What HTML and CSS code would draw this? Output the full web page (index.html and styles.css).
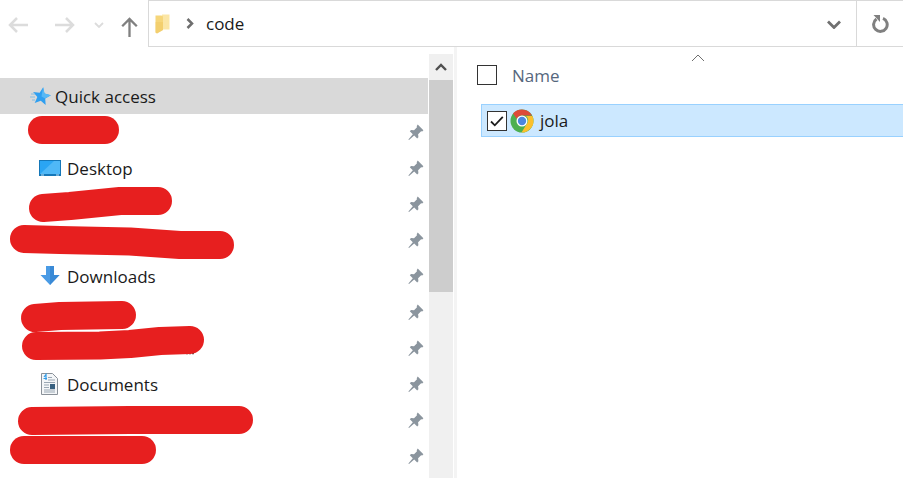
FILE: index.html
```html
<!DOCTYPE html>
<html lang="en">
<head>
<meta charset="utf-8">
<title>code</title>
<link rel="stylesheet" href="styles.css">
</head>
<body>
<svg class="defs" width="0" height="0" aria-hidden="true">
  <symbol id="pin" viewBox="0 0 16 16">
    <path d="M9.700.6l5.700 5.700-1.200 1.200-1.100-.3-3 3 .3 3-1.200 1.200-3-3L1 16l-.6-.6 4.400-5.200-3-3 1.200-1.200 3 .3 3-3-.3-1.100z" fill="#8b959e"/>
  </symbol>
</svg>
<div class="window">
  <header class="toolbar">
    <nav class="nav">
      <svg class="nav-icon back" width="22" height="18" viewBox="0 0 22 18"><path d="M21 9H3M10 2 3 9l7 7" fill="none" stroke="#dcdcdc" stroke-width="2.500"/></svg>
      <svg class="nav-icon forward" width="22" height="18" viewBox="0 0 22 18"><path d="M1 9h18M12 2l7 7-7 7" fill="none" stroke="#dcdcdc" stroke-width="2.500"/></svg>
      <svg class="nav-icon recent" width="10" height="6" viewBox="0 0 10 6"><path d="M1 1l4 4 4-4" fill="none" stroke="#dcdcdc" stroke-width="1.800"/></svg>
      <svg class="nav-icon up" width="17" height="20" viewBox="0 0 17 20"><path d="M8.500 20V2M1.200 9.200l7.300-7.300 7.300 7.300" fill="none" stroke="#808080" stroke-width="2.300"/></svg>
    </nav>
    <div class="address">
      <svg class="folder" width="15" height="20" viewBox="0 0 15 20"><path d="M7 .5h7.500v15H7z" fill="#fbe6a6"/><path d="M.5 1.500h6l1.500 1v13.500l-6 3.500-1.500-1z" fill="#f6d67a"/><path d="M.5 8h7.500v8l-6 3.500-1.500-1z" fill="#efc862" opacity=".5"/></svg>
      <svg class="crumb" width="8" height="11" viewBox="0 0 8 11"><path d="M1.500 1l4.500 4.500L1.500 10" fill="none" stroke="#6e6e6e" stroke-width="2.500"/></svg>
      <span class="path">code</span>
      <svg class="dropdown" width="14" height="9" viewBox="0 0 14 9"><path d="M1 1.500l6 6 6-6" fill="none" stroke="#707070" stroke-width="2.800"/></svg>
      <div class="refresh">
        <svg width="18" height="18" viewBox="0 0 18 18"><path d="M5.500 4A6.800 6.800 0 1 0 12 3.300" fill="none" stroke="#808080" stroke-width="3"/><path d="M2.500 0h6.500v7z" fill="#808080"/></svg>
      </div>
    </div>
  </header>
  <main class="main">
    <aside class="sidebar">
      <div class="tree">
        <div class="tree-top"></div>
        <div class="row row-active">
          <svg class="qa-icon" width="22" height="20" viewBox="0 0 22 20"><path d="M14.150 1.140L15.500 7.600 21.900 9.200 16.200 12.500 16.660 19.040 11.770 14.640 5.670 17.100 8.340 11.080 4.100 6.040 10.660 6.720z" fill="#2f9ff0"/><path d="M14.150 1.140L15.500 7.600 21.900 9.200 16.200 12.500 12.500 10.500z" fill="#58b8f5"/><path d="M2 8h4M1 11h5M3 14h3" stroke="#86bde0" stroke-width="1"/></svg>
          <span class="label">Quick access</span>
        </div>
        <div class="row"><svg class="pin"><use href="#pin"/></svg></div>
        <div class="row">
          <svg class="item-icon" width="22" height="16" viewBox="0 0 22 16"><path d="M0 0h22v16H0z" fill="#1577b8"/><path d="M1 1h20v13H1z" fill="#2aa5f3"/><path d="M1 14 15 1h6v13z" fill="#4fb8f7"/><path d="M2 15h3M17 15h3" stroke="#bfe3f8"/></svg>
          <span class="label">Desktop</span><svg class="pin"><use href="#pin"/></svg>
        </div>
        <div class="row"><svg class="pin"><use href="#pin"/></svg></div>
        <div class="row"><svg class="pin"><use href="#pin"/></svg></div>
        <div class="row">
          <svg class="item-icon" width="22" height="20" viewBox="0 0 22 20"><path d="M7 0h8v9h5.500L11 19 1.500 9H7z" fill="#4a9be5"/><path d="M11 0h4v9h5.500L11 19z" fill="#3a8ad6"/></svg>
          <span class="label">Downloads</span><svg class="pin"><use href="#pin"/></svg>
        </div>
        <div class="row"><svg class="pin"><use href="#pin"/></svg></div>
        <div class="row"><svg class="pin"><use href="#pin"/></svg></div>
        <div class="row">
          <svg class="item-icon" width="22" height="22" viewBox="0 0 22 22"><path d="M2.500.5h11l5 5v16h-16z" fill="#f4f6f8" stroke="#8a9199"/><path d="M5 4l2-2.500V7M4.500 5.500H8" fill="none" stroke="#2f9be8" stroke-width="1.200"/><path d="M9 4.500h4M9 7h7M5 9.500h11M5 12h5M5 14.500h5M5 17h11M5 19h11" stroke="#9aa7b3"/><path d="M11 11h5v5h-5z" fill="#38607f"/></svg>
          <span class="label">Documents</span><svg class="pin"><use href="#pin"/></svg>
        </div>
        <div class="row"><svg class="pin"><use href="#pin"/></svg></div>
        <div class="row"><svg class="pin"><use href="#pin"/></svg></div>
      </div>
      <svg class="redactions" width="260" height="478" viewBox="0 0 260 478" aria-hidden="true">
        <path d="M186 353.500h9" stroke="#555" stroke-width="1.500" stroke-dasharray="2 1"/>
        <g fill="none" stroke="#e71f1f" stroke-width="28" stroke-linecap="round" stroke-linejoin="round">
          <path d="M42 130h63"/>
          <path d="M43 208l27-2 50-5h38"/>
          <path d="M24 239l36 1 70 1.500 50 3.500h40"/>
          <path d="M35 318l25-2 62-1"/>
          <path d="M36 346l64-.5 30-1.500 30-3 30-1"/>
          <path d="M32 421l98-1h109"/>
          <path d="M24 450h118"/>
        </g>
      </svg>
      <div class="scrollbar">
        <div class="scroll-up"><svg width="12" height="8" viewBox="0 0 12 8"><path d="M1 7l5-5 5 5" fill="none" stroke="#505050" stroke-width="2.400"/></svg></div>
        <div class="scroll-thumb"></div>
      </div>
    </aside>
    <section class="content">
      <svg class="sort" width="14" height="8" viewBox="0 0 14 8"><path d="M1 7l6-6 6 6" fill="none" stroke="#6f6f6f"/></svg>
      <div class="header">
        <span class="check"></span>
        <span class="col-name">Name</span>
      </div>
      <div class="file">
        <span class="check check-on"><svg width="18" height="18" viewBox="0 0 18 18"><path d="M3 9.500l3.800 3.800 8-8.500" fill="none" stroke="#1c1c1c" stroke-width="1.800"/></svg></span>
        <svg class="chrome" width="24" height="24" viewBox="0 0 24 24">
          <circle cx="12" cy="12" r="11.500" fill="#4caf50"/>
          <path d="M12 .5A11.500 11.500 0 0 1 22 6.500H12A5.500 5.500 0 0 0 6.800 10L3 4.500A11.500 11.500 0 0 1 12 .5z" fill="#dd4b39"/>
          <path d="M22.400 7A11.500 11.500 0 0 1 11.500 23.500l5.200-8.500A5.500 5.500 0 0 0 16 7z" fill="#fbc02d"/>
          <circle cx="12" cy="12" r="5.500" fill="#fff"/>
          <circle cx="12" cy="12" r="4.200" fill="#4a86e0"/>
        </svg>
        <span class="file-name">jola</span>
      </div>
    </section>
  </main>
</div>
</body>
</html>
```

FILE: styles.css
```css
* {
  box-sizing: border-box;
}

html, body {
  margin: 0;
  height: 100%;
  overflow: hidden;
  background: #fff;
}

body {
  font-family: "Open Sans", "Noto Sans", sans-serif;
  font-size: 17px;
  color: #1a1a1a;
}

.defs {
  display: block;
  height: 0;
}

.window {
  display: flex;
  flex-direction: column;
  width: 903px;
  height: 478px;
}

.toolbar {
  display: flex;
  height: 47px;
  flex: none;
}

.nav {
  display: flex;
  align-items: center;
  width: 148px;
  flex: none;
  padding: 2px 0 0 7px;
}

.back { margin-right: 25px; }
.forward { margin-right: 18px; }
.recent { margin-right: 17px; }
.up { margin-top: 4px; }

.address {
  display: flex;
  align-items: center;
  flex: 1;
  border: 1px solid #d9d9d9;
  border-right: 0;
  padding-left: 6px;
}

.folder { margin-right: 16px; }
.crumb { margin-right: 12px; }

.path {
  flex: 1;
  font-size: 17px;
}

.dropdown { margin-right: 15px; margin-top: 1px; }

.refresh {
  display: flex;
  align-items: center;
  justify-content: center;
  width: 47px;
  height: 100%;
  border-left: 1px solid #d9d9d9;
}

.main {
  display: flex;
  flex: 1;
  min-height: 0;
}

.sidebar {
  position: relative;
  display: flex;
  width: 457px;
  flex: none;
  border-right: 3px solid #f4f4f4;
}

.tree {
  width: 428px;
  flex: none;
}

.tree-top {
  height: 31px;
}

.row {
  display: flex;
  align-items: center;
  height: 36px;
  padding-left: 39px;
  padding-right: 4px;
}

.row-active {
  background: #d9d9d9;
  padding-left: 29px;
}

.qa-icon {
  margin-right: 4px;
  flex: none;
}

.item-icon {
  margin-right: 6px;
  flex: none;
}

.label {
  flex: 1;
}

.pin {
  width: 16px;
  height: 16px;
  margin-left: auto;
  flex: none;
}

.redactions {
  position: absolute;
  left: 0;
  top: -47px;
  pointer-events: none;
}

.scrollbar {
  display: flex;
  flex-direction: column;
  width: 24px;
  margin: 7px 0 0 1px;
  background: #f0f0f0;
}

.scroll-up {
  display: flex;
  align-items: center;
  justify-content: center;
  height: 26px;
  flex: none;
}

.scroll-thumb {
  height: 212px;
  background: #cdcdcd;
}

.content {
  position: relative;
  flex: 1;
  min-width: 0;
}

.sort {
  position: absolute;
  left: 234px;
  top: 7px;
}

.header {
  display: flex;
  align-items: center;
  height: 57px;
  padding-left: 20px;
}

.check {
  display: flex;
  width: 20px;
  height: 20px;
  flex: none;
  border: 1.500px solid #333;
  margin-top: -2px;
}

.col-name {
  margin-left: 15px;
  color: #56677d;
}

.file {
  display: flex;
  align-items: center;
  height: 33px;
  margin-left: 24px;
  background: #cce8ff;
  border: 1px solid #99d1ff;
  border-right: 0;
  padding-left: 5px;
}

.check-on {
  background: #fff;
  margin-top: 0;
}

.chrome {
  margin-left: 3px;
  flex: none;
}

.file-name {
  margin-left: 6px;
}
```
